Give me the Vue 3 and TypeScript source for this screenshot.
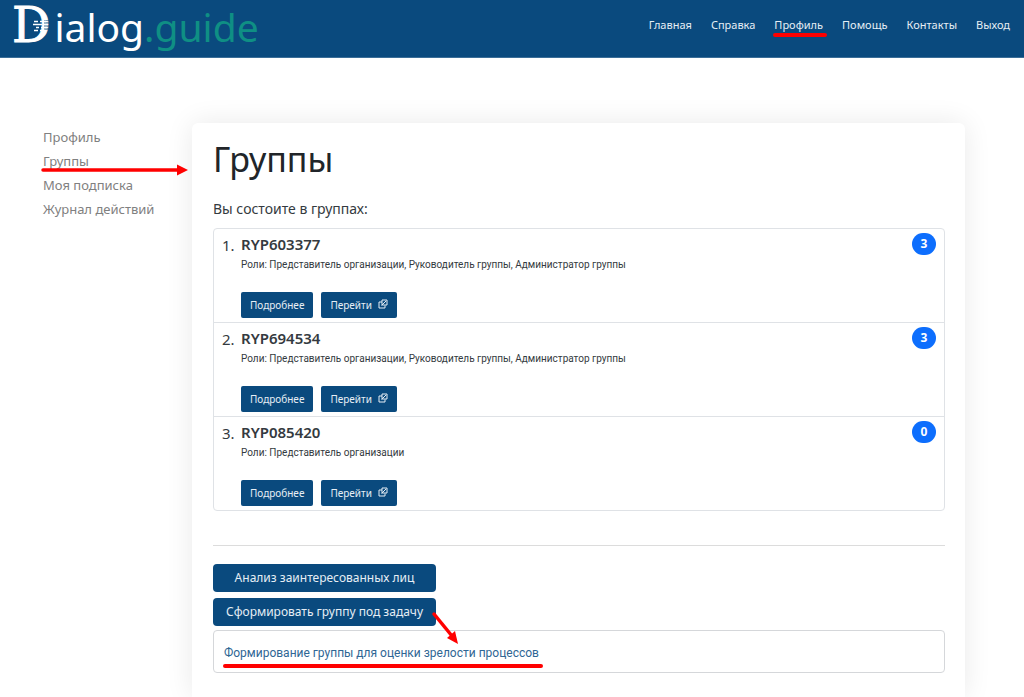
<script setup lang="ts">
interface NavItem {
  label: string
  marked?: boolean
}

interface Group {
  name: string
  roles: string
  count: number
}

const navItems: NavItem[] = [
  { label: 'Главная' },
  { label: 'Справка' },
  { label: 'Профиль', marked: true },
  { label: 'Помощь' },
  { label: 'Контакты' },
  { label: 'Выход' },
]

const sideItems: NavItem[] = [
  { label: 'Профиль' },
  { label: 'Группы', marked: true },
  { label: 'Моя подписка' },
  { label: 'Журнал действий' },
]

const groups: Group[] = [
  { name: 'RYP603377', roles: 'Представитель организации, Руководитель группы, Администратор группы', count: 3 },
  { name: 'RYP694534', roles: 'Представитель организации, Руководитель группы, Администратор группы', count: 3 },
  { name: 'RYP085420', roles: 'Представитель организации', count: 0 },
]
</script>

<template>
  <div class="page">
    <header class="topbar">
      <a href="#" class="logo">
        <span class="logo-initial">D<svg class="logo-lines" viewBox="0 0 18 12" aria-hidden="true">
            <path class="gap" d="M11 0H18M11 3H18M11 6H18M11 9H18" />
            <path d="M1 1.500H5M7 1.500H13M0 4.500H9M11 4.500H15M3 7.500H6M8 7.500H14M1 10.500H5M7 10.500H12" />
          </svg></span><span class="logo-name">ialog</span><span class="logo-suffix">.guide</span>
      </a>
      <nav class="topnav">
        <a v-for="item in navItems" :key="item.label" href="#" :class="{ underlined: item.marked }">{{ item.label }}</a>
      </nav>
    </header>

    <div class="body">
      <aside class="sidebar">
        <a v-for="item in sideItems" :key="item.label" href="#">
          {{ item.label }}
          <svg v-if="item.marked" class="side-arrow" viewBox="0 0 148 12" aria-hidden="true">
            <path class="stroke" d="M2 6H138" />
            <path class="head" d="M136 0.500L147 6L136 11.500Z" />
          </svg>
        </a>
      </aside>

      <main class="card">
        <h1>Группы</h1>
        <p class="intro">Вы состоите в группах:</p>

        <ol class="groups">
          <li v-for="(group, index) in groups" :key="group.name">
            <span class="number">{{ index + 1 }}.</span>
            <div class="info">
              <h2>{{ group.name }}</h2>
              <p>Роли: {{ group.roles }}</p>
              <div class="actions">
                <button type="button">Подробнее</button>
                <button type="button">
                  Перейти
                  <svg class="external" viewBox="0 0 10 10" aria-hidden="true">
                    <path d="M4 3H1V9H7V6.500" />
                    <path d="M4 1H9V6H4Z" />
                    <path d="M8 2L3.500 6.500" />
                  </svg>
                </button>
              </div>
            </div>
            <span class="badge">{{ group.count }}</span>
          </li>
        </ol>

        <hr />

        <div class="tools">
          <button type="button">Анализ заинтересованных лиц</button>
          <button type="button">
            Сформировать группу под задачу
            <svg class="task-arrow" viewBox="0 0 30 36" aria-hidden="true">
              <path class="stroke" d="M3 3L21 25" />
              <path class="head" d="M27 33L16 27L24 20Z" />
            </svg>
          </button>
        </div>

        <div class="result">
          <a href="#" class="underlined">Формирование группы для оценки зрелости процессов</a>
        </div>
      </main>
    </div>
  </div>
</template>

<style>
body {
  margin: 0;
  background: #fff;
}
</style>

<style scoped>
.page {
  display: flex;
  flex-direction: column;
  min-height: 100vh;
  font-family: "Noto Sans", "Open Sans", sans-serif;
  color: #343a40;
}

a {
  text-decoration: none;
}

button {
  border: 0;
  font-family: inherit;
  color: #e6eef5;
  background: #0a4a7e;
  cursor: pointer;
}

.topbar {
  display: flex;
  justify-content: space-between;
  box-sizing: border-box;
  height: 58px;
  padding: 0 14px 0 12px;
  background: #0a4a7e;
  border-bottom: 1px solid #3b6e98;
}

.logo {
  display: flex;
  align-items: baseline;
  font-size: 39px;
  line-height: 51px;
  color: #fff;
}

.logo-initial {
  position: relative;
  margin-right: 4px;
  font-family: "DejaVu Serif", serif;
  font-size: 48px;
  -webkit-text-stroke: 1px #fff;
}

.logo-lines {
  position: absolute;
  left: 21px;
  top: 20px;
  width: 18px;
  height: 12px;
  fill: none;
  stroke: #fff;
  stroke-width: 1.5;
}

.logo-lines .gap {
  stroke: #0a4a7e;
  stroke-width: 1;
}

.logo-suffix {
  color: #0f8f84;
}

.topnav {
  display: flex;
  align-items: center;
  gap: 19px;
  height: 50px;
  font-size: 11px;
  line-height: 20px;
}

.topnav a {
  color: #e6eef5;
}

.underlined {
  position: relative;
}

.underlined::after {
  content: "";
  position: absolute;
  left: -1px;
  right: -4px;
  bottom: -2px;
  height: 4px;
  border-radius: 2px;
  background: #f00;
}

.body {
  display: flex;
  flex: 1;
  padding: 65px 59px 0 43px;
}

.sidebar {
  flex: 0 0 149px;
  display: flex;
  flex-direction: column;
  padding-top: 2px;
  font-size: 13px;
  line-height: 24px;
}

.sidebar a {
  position: relative;
  color: #808080;
}

.side-arrow {
  position: absolute;
  left: -2px;
  top: 15px;
  width: 148px;
  height: 12px;
}

.stroke {
  fill: none;
  stroke: #f00;
  stroke-width: 3.5;
  stroke-linecap: round;
}

.head {
  fill: #f00;
}

.card {
  flex: 1;
  min-width: 0;
  padding: 12px 20px 24px 21px;
  border-radius: 6px 6px 0 0;
  background: #fff;
  box-shadow: 0 0 28px rgba(0, 0, 0, 0.09);
}

h1 {
  margin: 0;
  font-size: 34px;
  font-weight: 400;
  line-height: 48px;
  color: #212529;
}

.intro {
  margin: 14px 0 7px;
  font-size: 14px;
  line-height: 24px;
}

.groups {
  margin: 0;
  padding: 0;
  list-style: none;
  border: 1px solid #dfe2e6;
  border-radius: 4px;
}

.groups li {
  display: flex;
  padding: 4px 8px;
}

.groups li + li {
  border-top: 1px solid #dfe2e6;
}

.number {
  flex: 0 0 19px;
  font-size: 15px;
  line-height: 24px;
}

.info {
  flex: 1;
  min-width: 0;
}

h2 {
  margin: 0;
  font-size: 15px;
  font-weight: 600;
  line-height: 22px;
}

.info p {
  margin: 2px 0 19px;
  font-family: Roboto, "Noto Sans", sans-serif;
  font-size: 10px;
  line-height: 16px;
}

.actions {
  display: flex;
  gap: 8px;
}

.actions button {
  height: 26px;
  padding: 0 9px;
  border-radius: 2px;
  font-size: 10px;
}

.external {
  width: 10px;
  height: 10px;
  margin-left: 3px;
  fill: none;
  stroke: currentColor;
}

.badge {
  align-self: flex-start;
  min-width: 24px;
  border-radius: 11px;
  font-size: 12px;
  font-weight: 700;
  line-height: 22px;
  text-align: center;
  color: #fff;
  background: #0d6efd;
}

hr {
  margin: 34px 0 18px;
  border: 0;
  border-top: 1px solid #dcdcdc;
}

.tools {
  display: inline-grid;
  gap: 6px;
  vertical-align: top;
}

.tools button {
  position: relative;
  height: 28px;
  padding: 0 13px 2px 13px;
  border-radius: 4px;
  font-size: 12px;
}

.task-arrow {
  position: absolute;
  right: -25px;
  top: 13px;
  width: 30px;
  height: 36px;
  z-index: 1;
}

.result {
  margin-top: 4px;
  padding: 12px 10px 9px;
  border: 1px solid #d5d7da;
  border-radius: 4px;
  font-family: Roboto, "Noto Sans", sans-serif;
  font-size: 12px;
  line-height: 20px;
}

.result a {
  display: inline-block;
  color: #2f6694;
}

.result a::after {
  bottom: -5px;
}
</style>
